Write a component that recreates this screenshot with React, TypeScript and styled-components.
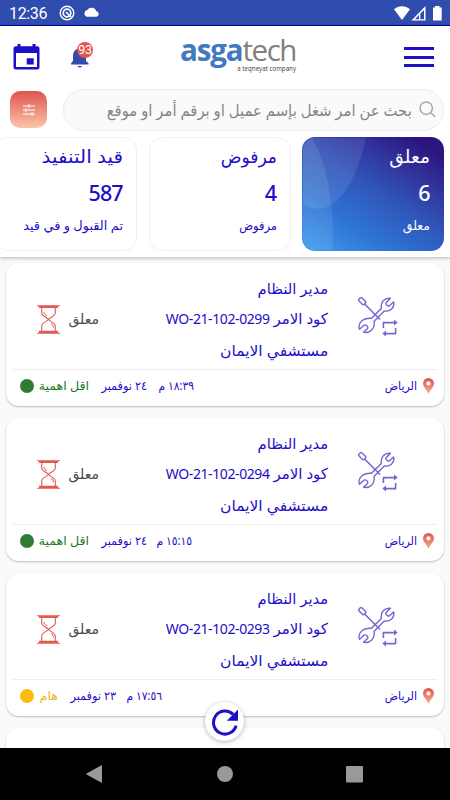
import React from "react";
import styled, { createGlobalStyle } from "styled-components";

const BLUE = "#1d0ec8";

const GlobalStyle = createGlobalStyle`
  * { box-sizing: border-box; }
  body { margin: 0; background: #fafafa; }
`;

const Screen = styled.div`
  position: relative;
  width: 450px;
  height: 800px;
  overflow: hidden;
  display: flex;
  flex-direction: column;
  direction: rtl;
  background: #fafafa;
  color: ${BLUE};
  font-family: "Noto Sans", "DejaVu Sans", sans-serif;
`;

const StatusBar = styled.div`
  flex: none;
  height: 26px;
  display: flex;
  align-items: center;
  direction: ltr;
  padding: 1px 8px 0 9px;
  background: #304dae;
  border-bottom: 1px solid #0000a2;
  color: #fff;
`;

const Clock = styled.span`
  width: 50px;
  padding-top: 2px;
  font: 400 16px/24px Roboto, sans-serif;
  letter-spacing: -0.35px;
`;

const StatusIcons = styled.svg`
  display: block;
  &:last-child { margin-left: auto; }
`;

const Top = styled.header`
  flex: none;
  position: relative;
  height: 231px;
  background: #fff;
  box-shadow: 0 1px 4px rgba(0, 0, 0, 0.28);
`;

const Bar = styled.div`
  display: flex;
  align-items: center;
  direction: ltr;
  height: 60px;
  padding: 2px 16px 0 13px;
`;

const Bell = styled.div`
  position: relative;
  width: 24px;
  height: 28px;
  margin: -3px 0 0 30px;
`;

const Badge = styled.span`
  position: absolute;
  left: 7px;
  top: 0;
  width: 16px;
  height: 16px;
  border-radius: 50%;
  background: #e2544d;
  color: #fff;
  font: 400 12.5px/16px Roboto, sans-serif;
  text-align: center;
  letter-spacing: -0.2px;
`;

const Brand = styled.div`
  width: 120px;
  height: 38px;
  margin: -2px 0 0 85px;
  display: flex;
  flex-direction: column;
  align-items: flex-end;
`;

const BrandName = styled.div`
  height: 25px;
  width: 117px;
  margin-right: 2px;
  color: #808080;
  font: 400 29.5px/25px "Open Sans", "Noto Sans", sans-serif;
  letter-spacing: -1.5px;
  white-space: nowrap;
  b { color: #4379c0; font-weight: 700; letter-spacing: -1.1px; }
`;

const BrandTag = styled.div`
  color: #3c3c3c;
  margin: 3px 3px 0 0;
  font: 400 6.2px/8px "Open Sans", sans-serif;
  white-space: nowrap;
`;

const Menu = styled.div`
  margin-left: auto;
  width: 30px;
  height: 20px;
  display: flex;
  flex-direction: column;
  justify-content: space-between;
`;

const MenuLine = styled.i`
  height: 3px;
  background: ${BLUE};
`;

const SearchRow = styled.div`
  display: flex;
  justify-content: space-between;
  align-items: center;
  height: 48px;
  padding: 0 6px 0 10px;
`;

const SearchBox = styled.div`
  display: flex;
  align-items: center;
  gap: 7px;
  width: 381px;
  height: 42px;
  margin-top: -1px;
  padding-right: 7px;
  border: 1px solid #ececec;
  border-radius: 21px;
  background: #fafafa;
`;

const Filter = styled.button`
  display: grid;
  place-items: center;
  width: 37px;
  height: 37px;
  margin-top: -1px;
  padding: 0;
  border: 0;
  border-radius: 10px;
  background: linear-gradient(#e1544f, #f9c6a8);
`;

const Label = styled.span<{ $size: number; $width?: number; $stretch?: number; $color?: string; $line?: number }>`
  display: block;
  flex: none;
  width: ${(p) => (p.$width ? `${p.$width}px` : "auto")};
  font-size: ${(p) => p.$size}px;
  line-height: ${(p) => p.$line ?? 24}px;
  color: ${(p) => p.$color ?? "inherit"};
  white-space: nowrap;
  transform: scaleX(${(p) => p.$stretch ?? 1});
  transform-origin: right center;
`;

const Code = styled.bdi`
  font-size: 14px;
  letter-spacing: -0.4px;
`;

const Tabs = styled.div`
  display: flex;
  gap: 11.5px;
  padding: 3px 6px 0 0;
`;

const Tab = styled.div<{ $active?: boolean }>`
  position: relative;
  flex: none;
  width: 142px;
  height: 114px;
  padding: 6px 13px 0 0;
  overflow: hidden;
  border-radius: 13px;
  border: 1px solid ${(p) => (p.$active ? "transparent" : "#f1f1f1")};
  color: ${(p) => (p.$active ? "#fff" : BLUE)};
  background: ${(p) => (p.$active ? "linear-gradient(212deg, #2d1580 10%, #3138a0 30%, #3056ba 48%, #2e74d3 72%, #419cf0 100%) border-box" : "#fff")};
`;

const Shine = styled.svg`
  position: absolute;
  inset: -1px auto auto -1px;
`;

const TabBody = styled.div`
  position: relative;
  display: flex;
  flex-direction: column;
`;

const Count = styled.span`
  direction: ltr;
  text-align: right;
  height: 36px;
  margin: 7px 0.5px 3px 0;
  font: 500 21.5px/36px "Noto Sans", sans-serif;
  letter-spacing: -1px;
`;

const List = styled.main`
  flex: 1;
  overflow: hidden;
  display: flex;
  flex-direction: column;
  gap: 12.5px;
  padding: 6px 6px 0;
`;

const Card = styled.article`
  flex: none;
  height: 142.5px;
  border-radius: 13px;
  background: #fff;
  box-shadow: 0 1px 2px rgba(0, 0, 0, 0.25);
`;

const CardMain = styled.div`
  display: flex;
  align-items: center;
  height: 107px;
  margin: 0 7px;
  padding: 2px 39px 0 24px;
  border-bottom: 1px solid #eeeeee;
`;

const Lines = styled.div`
  display: flex;
  flex-direction: column;
  margin: 4px 30px 0 0;
`;

const State = styled.div`
  display: flex;
  align-items: center;
  gap: 9px;
  margin: 4px auto 0 0;
`;

const CardFoot = styled.div`
  display: flex;
  align-items: center;
  height: 31px;
  padding: 0 10px 0 14px;
`;

const City = styled.div`
  display: flex;
  align-items: center;
  gap: 6px;
`;

const Meta = styled.div`
  display: flex;
  align-items: center;
  gap: 12px;
  margin-right: auto;
`;

const Priority = styled.div`
  display: flex;
  align-items: center;
  gap: 5px;
`;

const Dot = styled.i<{ $color: string }>`
  width: 14px;
  height: 14px;
  border-radius: 50%;
  background: ${(p) => p.$color};
`;

const Refresh = styled.button`
  position: absolute;
  left: 205px;
  top: 702px;
  width: 39px;
  height: 39px;
  display: grid;
  place-items: center;
  padding: 0;
  border: 0;
  border-radius: 50%;
  background: #fff;
  box-shadow: 0 1px 4px rgba(0, 0, 0, 0.3);
`;

const NavBar = styled.nav`
  flex: none;
  height: 52px;
  display: flex;
  justify-content: center;
  align-items: center;
  background: #000;
`;

interface Order {
  code: string;
  time: string;
  timeWidth: number;
  date: string;
  priority: string;
  priorityWidth: number;
  color: string;
  dot: string;
}

const ORDERS: Order[] = [
  { code: "WO-21-102-0299", time: "١٨:٣٩ م", timeWidth: 35, date: "٢٤ نوفمبر", priority: "اقل اهمية", priorityWidth: 50, color: "#1b7a22", dot: "#2e7d32" },
  { code: "WO-21-102-0294", time: "١٥:١٥ م", timeWidth: 33, date: "٢٤ نوفمبر", priority: "اقل اهمية", priorityWidth: 50, color: "#1b7a22", dot: "#2e7d32" },
  { code: "WO-21-102-0293", time: "١٧:٥٦ م", timeWidth: 34, date: "٢٣ نوفمبر", priority: "هام", priorityWidth: 19, color: "#f3b229", dot: "#fbbc14" },
];

const ToolsIcon = () => (
  <svg width="40" height="40" viewBox="0 0 40 40" fill="none" stroke="#7468cf" strokeWidth="1.4" strokeLinejoin="round">
    <rect x="-1.9" y="-3.6" width="4.2" height="7.4" rx="1.4" transform="translate(4 4.2) rotate(-45)" />
    <path d="M6.6 7L22 22.5" strokeWidth="1.6" />
    <path d="M13.5 21.3L23.3 11.6C22.3 5.2 26.6 .7 32.4 1.3L28.3 5.4Q27.4 6.5 28.4 7.7L29.6 8.8Q30.8 9.4 31.8 8.6L35.6 5C37 10.8 32.2 15 26.3 14L16 24.4C17.4 30.8 12.7 36.4 5.6 35.3L9.5 31.5Q10.2 30.4 9.4 29.3L8.2 28.2Q7.2 27.5 6 28.2L1.5 32.2C-.8 26.2 5 20.8 13.5 21.3Z" />
    <path d="M25.4 31V25.6H37M37.6 31V36.6H27" strokeWidth="1.6" />
    <path d="M36 22.6L39.7 25.6L36 28.6ZM28 33.6L24.3 36.6L28 39.6Z" fill="#7468cf" stroke="none" />
  </svg>
);

const HourglassIcon = () => (
  <svg width="23" height="29" viewBox="0 0 23 29" fill="none" stroke="#e35850">
    <path d="M2 2H21M2 26.8H21" strokeWidth="2.2" />
    <path d="M0 .7H23M0 28.3H23" strokeWidth="1.1" />
    <path d="M4.7 3V8C4.7 11 10 12.4 11.5 14.5C13 16.5 18.3 18 18.3 21V26M18.3 3V8C18.3 11 13 12.4 11.5 14.5C10 16.5 4.7 18 4.7 21V26" strokeWidth="1.1" />
    <path d="M6.8 7C7 9 8.7 10 10 11M14 18.5C15.5 19.2 16.4 20.5 16.5 22.5" />
  </svg>
);

const PinIcon = () => (
  <svg width="11" height="16" viewBox="0 0 11 16">
    <defs>
      <linearGradient id="pin" x2="0" y2="1">
        <stop stopColor="#e1504b" />
        <stop offset="1" stopColor="#f6b295" />
      </linearGradient>
    </defs>
    <path fill="url(#pin)" fillRule="evenodd" d="M5.5 0A5.5 5.5 0 0 0 0 5.5C0 9 4 12 5.5 16C7 12 11 9 11 5.5A5.5 5.5 0 0 0 5.5 0ZM5.5 3.3A2.1 2.1 0 1 1 5.5 7.5A2.1 2.1 0 0 1 5.5 3.3Z" />
  </svg>
);

const OrderCard = ({ order }: { order: Order }) => (
  <Card>
    <CardMain>
      <ToolsIcon />
      <Lines>
        <Label $size={15} $line={30.5} $stretch={0.985}>مدير النظام</Label>
        <Label $size={15} $line={30.5}>كود الامر <Code>{order.code}</Code></Label>
        <Label $size={15} $line={30.5} $stretch={1.035}>مستشفي الايمان</Label>
      </Lines>
      <State>
        <Label $size={14} $width={30} $color="#4a4a4a">معلق</Label>
        <HourglassIcon />
      </State>
    </CardMain>
    <CardFoot>
      <City>
        <PinIcon />
        <Label $size={12} $width={32} $stretch={0.92}>الرياض</Label>
      </City>
      <Meta>
        <Label $size={12} $width={order.timeWidth} $stretch={0.9}>{order.time}</Label>
        <Label $size={12} $width={46} $stretch={0.94}>{order.date}</Label>
        <Priority>
          <Label $size={12} $width={order.priorityWidth} $stretch={1.05} $color={order.color}>{order.priority}</Label>
          <Dot $color={order.dot} />
        </Priority>
      </Meta>
    </CardFoot>
  </Card>
);

export default function App() {
  return (
    <Screen>
      <GlobalStyle />
      <StatusBar>
        <Clock>12:36</Clock>
        <StatusIcons width="42" height="16" viewBox="0 0 42 16" fill="none" stroke="#fff">
          <circle cx="8" cy="8" r="6.8" strokeWidth="1.4" />
          <circle cx="8" cy="8" r="3.8" strokeWidth="1.7" />
          <path d="M7 7L12 12" strokeWidth="1.7" />
          <path fill="#fff" stroke="none" d="M28 11.8A3.5 3.5 0 0 1 28.3 5A5 5 0 0 1 37.3 6.3A2.8 2.8 0 0 1 37.5 11.8Z" />
        </StatusIcons>
        <StatusIcons width="48" height="15" viewBox="0 0 48 15" fill="#fff">
          <path d="M0 3.2C4.5-.9 11.5-.9 16 3.2L8 14Z" />
          <path fillRule="evenodd" d="M17.5 14.5L31.5 0V14.5ZM21 13.2H25V9ZM26.3 13.2H30V4L26.3 7.8Z" />
          <path d="M39 1.5H41V0H45.5V1.5H47.7V14.5H39Z" />
        </StatusIcons>
      </StatusBar>

      <Top>
        <Bar>
          <svg width="27" height="26" viewBox="0 0 27 26">
            <path fill={BLUE} fillRule="evenodd" d="M4.5 0H7.5V2.2H19.5V0H22.5V2.2H24Q26.5 2.2 26.5 4.7V23Q26.5 25.5 24 25.5H3Q.5 25.5 .5 23V4.7Q.5 2.2 3 2.2H4.5ZM3 9V23H24V9ZM13.7 14.3H20.7V20.6H13.7Z" />
          </svg>
          <Bell>
            <svg width="24" height="28" viewBox="0 0 24 28" fill="#304dae">
              <path d="M1 22.5V21.3L3 19V14C3 9.5 6 7 8 6.8V6H11V6.8C14 7.5 16 10 16 14V19L18.5 21.3V22.5Z" />
              <path d="M7.5 24H12A2.3 2 0 0 1 7.5 24Z" />
            </svg>
            <Badge>93</Badge>
          </Bell>
          <Brand>
            <BrandName><b>asga</b>tech</BrandName>
            <BrandTag>a teqneyat company</BrandTag>
          </Brand>
          <Menu><MenuLine /><MenuLine /><MenuLine /></Menu>
        </Bar>

        <SearchRow>
          <SearchBox>
            <svg width="17" height="17" viewBox="0 0 17 17" fill="none" stroke="#a3abb1" strokeWidth="1.5" strokeLinecap="round">
              <circle cx="7.2" cy="7.2" r="6.2" />
              <path d="M12 12L15.8 15.5" />
            </svg>
            <Label $size={16} $stretch={0.928} $color="#858585">بحث عن امر شغل بإسم عميل او برقم أمر او موقع</Label>
          </SearchBox>
          <Filter>
            <svg width="12" height="12" viewBox="0 0 12 12" fill="none" stroke="#fff">
              <path d="M0 2H4.3M7.7 2H12M0 6H1.3M4.7 6H12M0 10H7.3M10.7 10H12" />
              <circle cx="6" cy="2" r="1.2" /><circle cx="3" cy="6" r="1.2" /><circle cx="9" cy="10" r="1.2" />
            </svg>
          </Filter>
        </SearchRow>

        <Tabs>
          <Tab $active>
            <Shine width="143" height="115" viewBox="0 0 143 115" fill="#fff" fillOpacity="0.09">
              <path d="M0 0H64C57 38 38 72 16 72Q7 72 0 66Z" />
              <path d="M0 0H9C22 20 32 55 31 115H0Z" />
            </Shine>
            <TabBody>
              <Label $size={18} $stretch={1.04}>معلق</Label>
              <Count>6</Count>
              <Label $size={12.5}>معلق</Label>
            </TabBody>
          </Tab>
          <Tab>
            <TabBody>
              <Label $size={18} $stretch={0.95}>مرفوض</Label>
              <Count>4</Count>
              <Label $size={12.5} $stretch={0.92}>مرفوض</Label>
            </TabBody>
          </Tab>
          <Tab>
            <TabBody>
              <Label $size={18} $stretch={1.11}>قيد التنفيذ</Label>
              <Count>587</Count>
              <Label $size={12.5} $stretch={1.035}>تم القبول و في قيد</Label>
            </TabBody>
          </Tab>
        </Tabs>
      </Top>

      <List>
        {ORDERS.map((order) => <OrderCard key={order.code} order={order} />)}
        <Card />
      </List>

      <Refresh>
        <svg width="28" height="28" viewBox="0 0 28 28" fill="none" stroke={BLUE} strokeWidth="3">
          <path d="M22.1 6.4A11.5 11.5 0 1 0 25.1 17.6" />
          <path d="M27 1.5V12.7H15.8Z" fill={BLUE} stroke="none" />
        </svg>
      </Refresh>

      <NavBar>
        <svg width="278" height="18" viewBox="0 0 278 18" fill="#999">
          <path d="M15 .5Q16 0 16 1V17Q16 18 15 17.5L.5 9.5Q0 9 .5 8.5Z" />
          <circle cx="139" cy="9" r="8" />
          <rect x="260" y="1" width="17" height="16.5" rx="1" />
        </svg>
      </NavBar>
    </Screen>
  );
}
